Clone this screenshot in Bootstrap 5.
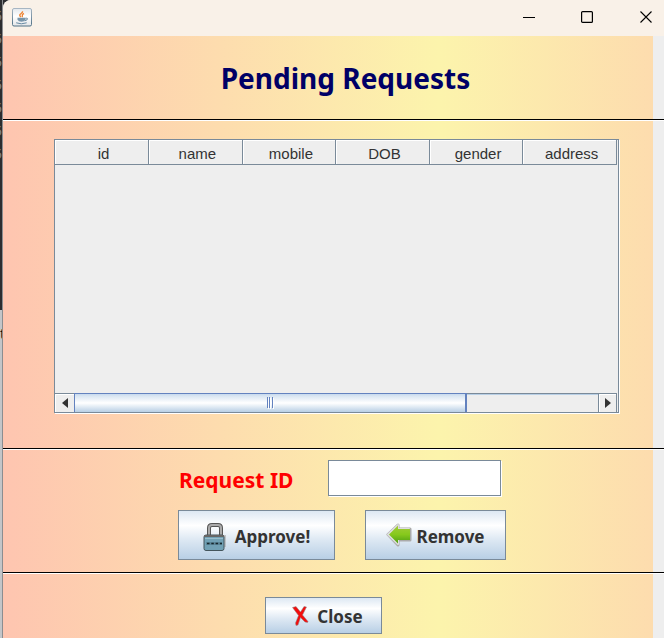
<!DOCTYPE html>
<html lang="en">
<head>
<meta charset="utf-8">
<meta name="viewport" content="width=device-width, initial-scale=1">
<title>Pending Requests</title>
<link href="https://cdn.jsdelivr.net/npm/bootstrap@5.3.0/dist/css/bootstrap.min.css" rel="stylesheet">
<style>
  body { background: #2c2d30; font-family: "Noto Sans", "Open Sans", sans-serif; color: #333; }
  .behind { width: 3px; background: linear-gradient(#2c2d30 310px, #c3c5c8 310px); border-right: 1px solid #8b8d90; font-size: 14px; line-height: 23px; color: #85868a; }
  .behind .rows { height: 322px; padding-top: 4px; }
  .behind .tail { color: #111; }
  .win { background: #eee; border-top-left-radius: 8px; overflow: hidden; min-width: 0; }
  .titlebar { height: 36px; background: #f9f1e8; padding-left: 9px; }
  .titlebar button { width: 58px; height: 34px; border: 0; background: none; padding: 0; }
  .titlebar button:last-child { width: 48px; padding-left: 12px; }
  .panel-bg { background: linear-gradient(90deg, #fec5b0, #fcf4ac 67%, #fddcae) no-repeat 0 0 / calc(100% - 11px) 100%; }
  .rule { border-bottom: 1px solid #fff; box-shadow: inset 0 -1px #000; }
  .head { height: 85px; padding-left: 24px; }
  .head h1 { font-size: 28px; line-height: 40px; font-weight: 700; color: #006; }
  .list-area { padding: 18px 45px 36px 51px; }
  .grid-box { border: 1px solid #7a8a99; box-shadow: 1px 1px #fff; background: #eee; height: 274px; padding-right: 1px; }
  .grid-box table { font: 15px/20px "Liberation Sans", Arial, sans-serif; table-layout: fixed; }
  .grid-box th { font-weight: 400; text-align: center; padding: 4px 0 0 4px; border: solid #7a8a99; border-width: 0 1px 1px 0; box-shadow: inset 1px 1px #fff; }
  .hbar { height: 19px; border-top: 1px solid #7a8a99; }
  .hbar button { width: 19px; border: 0; padding: 0; background: #eee; box-shadow: inset 1px 1px #fff; }
  .hbar button:last-child { border: solid #7a8a99; border-width: 0 1px; }
  .track { box-shadow: inset 0 1px #b8cfe5; }
  .thumb { width: 75%; border: solid #6382bf; border-width: 1px 2px 0 1px; margin-top: -1px; background: linear-gradient(#c8daee, #dde8f3 15%, #fff 50%, #b8cfe5); }
  .form-area { padding: 10px 0 13px 175px; }
  .form-area label { width: 150px; font-size: 21px; line-height: 30px; font-weight: 700; color: red; padding: 5px 0 0 1px; }
  .form-area input { width: 173px; height: 36px; border: 1px solid #7a8a99; border-radius: 0; padding: 4px; box-shadow: 1px 1px #fff; }
  .actions { gap: 30px; padding-top: 14px; }
  .metal { border: 1px solid #7a8a99; border-radius: 0; padding: 3px 0 0; font-size: 17px; line-height: 24px; font-weight: 700; color: #333; background: linear-gradient(#dde8f3, #fff 30%, #dde8f3 60%, #b8cfe5); }
  .tall { height: 50px; }
  .approve { width: 157px; }
  .remove { width: 141px; }
  .remove svg { margin-bottom: 3px; }
  .close-area { padding: 23px 0 3px 262px; }
  .shut { width: 117px; height: 37px; padding-left: 8px; }
  .shut svg { margin-bottom: 2px; }
</style>
</head>
<body>
<div class="d-flex min-vh-100">
  <div class="behind flex-shrink-0 overflow-hidden" aria-hidden="true">
    <div class="rows d-flex flex-column align-items-end"><span>5</span><span>5</span><span>5</span><span>5</span><span>5</span><span>5</span><span>5</span></div>
    <div class="tail">t</div>
  </div>
  <div class="win flex-grow-1 d-flex flex-column">
    <header class="titlebar d-flex align-items-start">
      <svg class="mt-2" width="20" height="19" viewBox="0 0 20 19" role="img" aria-label="Java">
        <defs><linearGradient id="tile" x1="0" y1="0" x2="0" y2="1"><stop stop-color="#e3e8ed"/><stop offset=".45" stop-color="#fff"/><stop offset="1" stop-color="#e4e6e8"/></linearGradient>
        <linearGradient id="edge" x1="0" y1="0" x2="0" y2="1"><stop stop-color="#a7b6c3"/><stop offset="1" stop-color="#4f7085"/></linearGradient></defs>
        <rect x=".5" y=".5" width="19" height="17.5" rx="1.5" fill="url(#tile)" stroke="url(#edge)"/>
        <path d="M10.500 3.200C11.500 5.500 5 6 9 9M12 5.500C8.500 7 11.500 7.500 10 9" fill="none" stroke="#ee8636" stroke-width="1.400"/>
        <path d="M5.500 9.800h8v2q-1 2-4 2t-4-2z" fill="#7895aa"/><path d="M13.500 10.300q3-.5 1.500 1.500l-2.300 1M4.200 14.800q5 2 10.500 0" fill="none" stroke="#6689a2"/>
      </svg>
      <div class="d-flex ms-auto">
        <button type="button" aria-label="Minimize"><svg class="d-block mx-auto" width="12" height="13" viewBox="0 0 12 13"><path d="M0 6.500h12" stroke="#000"/></svg></button>
        <button type="button" aria-label="Maximize"><svg class="d-block mx-auto" width="12" height="12" viewBox="0 0 12 12"><rect x=".6" y=".6" width="10.800" height="10.800" rx="1" fill="none" stroke="#000" stroke-width="1.200"/></svg></button>
        <button type="button" aria-label="Close window"><svg class="d-block mx-auto" width="12" height="12" viewBox="0 0 12 12"><path d="M.5.500l11 11m0-11l-11 11" stroke="#000" stroke-width="1.100"/></svg></button>
      </div>
    </header>
    <main class="panel-bg flex-grow-1">
      <div class="head rule d-flex align-items-center justify-content-center"><h1 class="mb-0">Pending Requests</h1></div>
      <section class="list-area rule">
        <div class="grid-box d-flex flex-column">
          <table class="w-100">
            <thead><tr><th scope="col">id</th><th scope="col">name</th><th scope="col">mobile</th><th scope="col">DOB</th><th scope="col">gender</th><th scope="col">address</th></tr></thead>
            <tbody></tbody>
          </table>
          <div class="hbar d-flex mt-auto">
            <button type="button" aria-label="Scroll left"><svg class="d-block mx-auto" width="6" height="10" viewBox="0 0 6 10"><path d="M6 0v10L0 5z" fill="#333"/></svg></button>
            <div class="track flex-grow-1 d-flex">
              <div class="thumb d-flex align-items-center justify-content-center"><svg width="7" height="12" viewBox="0 0 7 12"><path d="M1.500 1v11M3.500 1v11M6.500 1v11" stroke="#fff"/><path d="M.5 0v11M2.500 0v11M5.500 0v11" stroke="#6382bf"/></svg></div>
            </div>
            <button type="button" aria-label="Scroll right"><svg class="d-block mx-auto" width="6" height="10" viewBox="0 0 6 10"><path d="M0 0v10L6 5z" fill="#333"/></svg></button>
          </div>
        </div>
      </section>
      <form class="form-area rule">
        <div class="d-flex"><label for="request-id">Request ID</label><input id="request-id" type="text"></div>
        <div class="actions d-flex">
          <button type="button" class="btn metal tall approve d-flex align-items-center justify-content-center">
            <svg class="me-2" width="24" height="28" viewBox="0 0 24 28">
              <path d="M21 12h2v12h-2z" fill="#aaa" opacity=".6"/>
              <path d="M6 13V5q0-3 3-3h6q3 0 3 3v8" fill="none" stroke="#555" stroke-width="4"/>
              <path d="M6 12V5q0-3 3-3h6q3 0 3 3v7" fill="none" stroke="#aaa" stroke-width="2"/>
              <rect x="1" y="12" width="20" height="15.500" rx="2" fill="#71a1b5" stroke="#44555c"/>
              <path d="M1 12h20v2H1z" fill="#666"/><path d="M2 15.500h18" stroke="#99bdcc"/>
              <path d="M3 20.500h16" stroke="#5c8799" stroke-width="3"/><path d="M4 20.500h15" stroke="#17272d" stroke-width="1.600" stroke-dasharray="2.500 1.800"/>
            </svg>Approve!</button>
          <button type="button" class="btn metal tall remove d-flex align-items-center justify-content-center">
            <svg class="me-1" width="26" height="24" viewBox="0 0 26 24">
              <defs><linearGradient id="leaf" x1="0" y1="0" x2="0" y2="1"><stop stop-color="#a2cb38"/><stop offset=".5" stop-color="#86c91c"/><stop offset="1" stop-color="#4d9e13"/></linearGradient></defs>
              <path d="M12 2L2 11.500 12 22v-5h12V6H12z" fill="#aaa" stroke="#aaa" stroke-width="3" stroke-linejoin="round"/>
              <path d="M12 2L2 11.500 12 21v-5h11V6H12z" fill="#ddd" stroke="#ddd" stroke-width="2" stroke-linejoin="round"/>
              <path d="M12 2.500L3 11.500l9 9V17h12V6H12z" fill="url(#leaf)"/>
            </svg>Remove</button>
        </div>
      </form>
      <div class="close-area">
        <button type="button" class="btn metal shut d-flex align-items-center justify-content-center">
          <svg class="me-2" width="17" height="20" viewBox="0 0 17 20"><path d="M.5 1.500l3.500-1 4.500 5.500 3.500-5.500 2.500.5-4 8 5.500 6.500-.5 1-2.500-.5-4.500-4.500-2.500 7.500-2 .5-.5-2.500 3-7.500z" fill="#f30d0d" stroke="#888" stroke-width=".5"/></svg>Close</button>
      </div>
    </main>
  </div>
</div>
<script src="https://cdn.jsdelivr.net/npm/bootstrap@5.3.0/dist/js/bootstrap.bundle.min.js"></script>
</body>
</html>
